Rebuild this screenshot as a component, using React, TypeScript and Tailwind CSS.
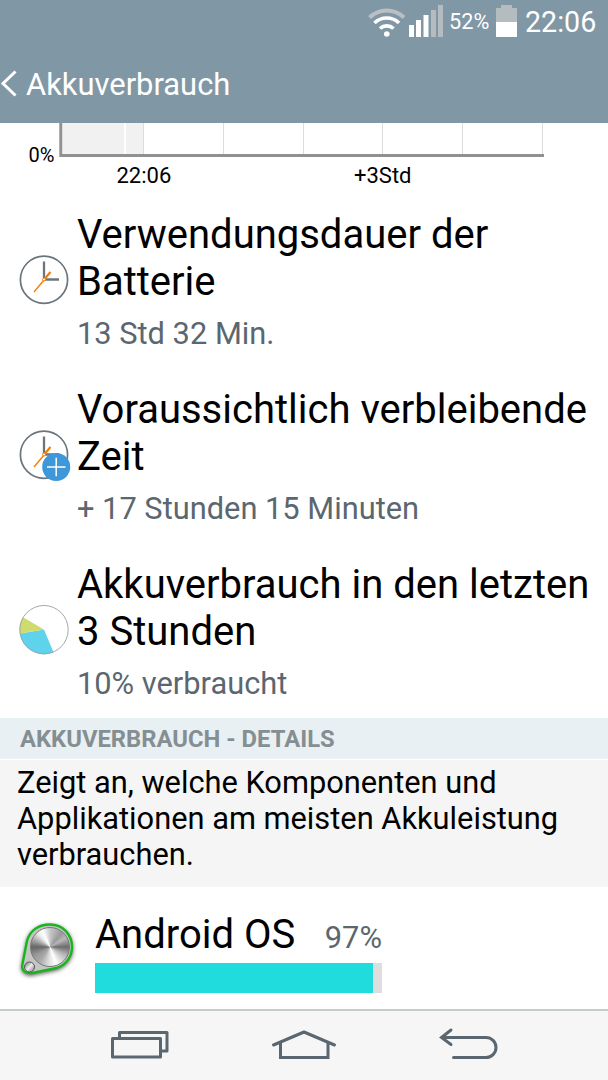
import { ReactNode } from "react";

interface UsageItemProps {
  icon: ReactNode;
  lines: string[];
  value: string;
}

const ClockIcon = ({ plus = false }: { plus?: boolean }) => (
  <svg className="h-[52px] w-[52px]" viewBox="0 0 52 52" fill="none">
    <circle cx="25" cy="25.7" r="23.6" stroke="#6b757c" strokeWidth="1.7" />
    <path d="M25 7.5V24M26 25.5H40" stroke="#6b757c" strokeWidth="2.3" />
    <path d="M15 38L25 26" stroke="#f57c00" strokeWidth="1.3" />
    <path d="M26 24.5L31.5 18" stroke="#f57c00" strokeWidth="2.2" />
    <circle cx="25" cy="25.5" r="1.5" fill="#fff" stroke="#f57c00" />
    {plus && (
      <>
        <circle cx="37.2" cy="38" r="14" fill="#3d97d8" />
        <path d="M28 38H46.5M37.2 28.8V47.3" stroke="#fff" strokeWidth="1.5" />
      </>
    )}
  </svg>
);

const PieIcon = () => (
  <svg className="h-[52px] w-[52px]" viewBox="0 0 52 52">
    <path d="M25 25.5L34.5 48.3A24.5 24.5 0 0 1 .8 29.5Z" fill="#5fd3ec" />
    <path d="M25 25.5L.8 29.5A24.5 24.5 0 0 1 4 13.3Z" fill="#cfdb6e" />
    <circle cx="25" cy="25.7" r="24.2" fill="none" stroke="#9a9fa1" strokeWidth="0.9" />
  </svg>
);

const UsageItem = ({ icon, lines, value }: UsageItemProps) => {
  return (
    <div className="flex h-[175px] pl-[19px]">
      <div className="mt-[61px] w-[58px] shrink-0">{icon}</div>
      <div className="pt-[19px] whitespace-nowrap">
        {lines.map((line) => (
          <div key={line} className="text-[40px] leading-[46.5px] text-black">
            {line}
          </div>
        ))}
        <div className="mt-[10px] text-[30.8px] leading-[37px] text-[#5b6770]">{value}</div>
      </div>
    </div>
  );
};

const StatusBar = () => (
  <div className="flex h-[44px] items-center whitespace-nowrap text-white">
    <svg className="ml-[368px] h-[44px] w-[76px] shrink-0" viewBox="368 0 76 44" fill="none">
      <path d="M369.5 17.5A24.5 24.5 0 0 1 404 17.5" stroke="#b9bfc2" strokeWidth="4" />
      <path d="M374.5 23A17.5 17.5 0 0 1 399 23" stroke="#fff" strokeWidth="3.6" />
      <path d="M380 28.5A10 10 0 0 1 393.5 28.5" stroke="#fff" strokeWidth="3.6" />
      <circle cx="386.8" cy="34" r="2.8" fill="#fff" />
      <path d="M409 25h5v12h-5zM416 20h5v17h-5zM423.5 15h5v22h-5z" fill="#fff" />
      <path d="M431 10h5v27h-5zM438 5h5v32h-5z" fill="#b5bcbf" />
    </svg>
    <span className="ml-[5px] w-[47px] pt-px text-[21.7px]">52%</span>
    <svg className="h-[44px] w-[22px] shrink-0" viewBox="496 0 22 44">
      <path d="M496 8h5V5h11v3h5v14h-21z" fill="#b5bcbf" />
      <path d="M496 22h21v15h-21z" fill="#fff" />
    </svg>
    <span className="ml-[7px] pt-px text-[28.6px]">22:06</span>
  </div>
);

const BatteryChart = () => (
  <svg className="block h-[70px] w-full" viewBox="0 123 608 70" fontFamily="Roboto, sans-serif" fill="#000">
    <path d="M63 123h61v31h-61zM126 123h17v31h-17z" fill="#f1f1f1" />
    <path
      d="M143.5 123v31M223.5 123v31M303.5 123v31M382.5 123v31M462.5 123v31M542.5 123v31"
      stroke="#dcdcdc"
    />
    <path d="M60.8 123V155.5H544" fill="none" stroke="#919191" strokeWidth="3" />
    <text x="28.5" y="162" fontSize="20">0%</text>
    <text x="116.5" y="182.5" fontSize="22">22:06</text>
    <text x="354" y="182.5" fontSize="22">+3Std</text>
  </svg>
);

const outline =
  "M9 24C12 13 21 7.5 32 7.5C45 7.5 54 17.5 54 30C54 42 45 50 36 51.5L14 56C7 57 3 53 4.5 47Z";

const AndroidOsIcon = () => (
  <div className="relative h-[66px] w-[62px]">
    <svg className="h-full w-full overflow-visible" viewBox="0 0 62 66">
      <defs>
        <linearGradient id="knob" x1="0" y1="0" x2="1" y2="1">
          <stop offset="0" stopColor="#666" />
          <stop offset=".5" stopColor="#eee" />
          <stop offset="1" stopColor="#777" />
        </linearGradient>
        <filter id="shadow" x="-20%" y="-20%" width="140%" height="140%">
          <feGaussianBlur stdDeviation="2" />
        </filter>
      </defs>
      <path d={outline} fill="#555" stroke="#555" strokeWidth="2" transform="translate(0 1.5)" filter="url(#shadow)" />
      <path d={outline} fill="#c4c6c4" stroke="#18b51c" strokeWidth="2.4" />
      <circle cx="11.5" cy="50" r="5" fill="url(#knob)" stroke="#555" />
    </svg>
    {/* brushed metal disc */}
    <div className="absolute top-[10px] left-[12px] h-[40px] w-[40px] rounded-full border border-[#777] bg-[conic-gradient(#c8c8c8,#999_40deg,#b8b8b8_60deg,#6c6c6c_90deg,#b0b0b0_115deg,#ddd_140deg,#fff_160deg,#ddd_185deg,#aaa_215deg,#999_240deg,#666_270deg,#aaa_295deg,#eee_320deg,#fff_335deg,#c8c8c8)]" />
  </div>
);

const NavBar = () => (
  <div className="h-[71px] border-t-2 border-[#c6cccb] bg-[#f6f6f6]">
    <svg className="block h-[69px] w-full" viewBox="0 1011 608 69" fill="none" stroke="#5b6770" strokeWidth="3">
      <path d="M112.5 1038.5H160.5V1057H112.5Z" strokeLinejoin="round" />
      <path d="M119.5 1037V1032.5H167V1051H162" strokeLinejoin="round" />
      <path d="M273.5 1045L304 1032L334.5 1045" strokeLinecap="round" strokeLinejoin="round" />
      <path d="M280.5 1043V1057.5H328V1043" />
      <path
        d="M451 1030L441.5 1037.5L451 1044.5M442 1037.5H486A10 10 0 0 1 486 1057.5H453.5"
        strokeLinecap="round"
      />
    </svg>
  </div>
);

const App = () => {
  return (
    <div className="flex h-[1080px] w-[608px] flex-col overflow-hidden bg-white font-[Roboto,sans-serif]">
      <header className="h-[123px] shrink-0 bg-[#8097a5]">
        <StatusBar />
        <div className="flex h-[79px] items-center text-white">
          <svg className="h-[30px] w-[18px]" viewBox="0 0 18 30" fill="none" stroke="#fff" strokeWidth="3">
            <path d="M15.5 2.5L3 14.5L15.5 26.5" />
          </svg>
          <h1 className="ml-[8px] pt-[3px] text-[30.9px]">Akkuverbrauch</h1>
        </div>
      </header>
      <main className="flex-1">
        <BatteryChart />
        <UsageItem icon={<ClockIcon />} lines={["Verwendungsdauer der", "Batterie"]} value="13 Std 32 Min." />
        <UsageItem
          icon={<ClockIcon plus />}
          lines={["Voraussichtlich verbleibende", "Zeit"]}
          value="+ 17 Stunden 15 Minuten"
        />
        <UsageItem
          icon={<PieIcon />}
          lines={["Akkuverbrauch in den letzten", "3 Stunden"]}
          value="10% verbraucht"
        />
        <div className="h-[41px] bg-[#e8f0f4] pl-[20px] text-[23.8px] leading-[43px] font-bold text-[#858e91]">
          AKKUVERBRAUCH - DETAILS
        </div>
        <div className="mt-px h-[127px] bg-[#f5f5f5] pt-[5px] pl-[17px] text-[30.8px] leading-[36px] whitespace-nowrap text-black">
          <div>Zeigt an, welche Komponenten und</div>
          <div>Applikationen am meisten Akkuleistung</div>
          <div>verbrauchen.</div>
        </div>
        <div className="flex h-[122px] pl-[18px]">
          <div className="mt-[30px] w-[77px] shrink-0">
            <AndroidOsIcon />
          </div>
          <div className="w-[287px] pt-[24px]">
            <div className="flex h-[47px] items-baseline justify-between whitespace-nowrap">
              <span className="text-[40px] leading-[47px] text-black">Android OS</span>
              <span className="text-[30.8px] text-[#5b6770]">97%</span>
            </div>
            <div className="mt-[5px] h-[30px] bg-[#dedede]">
              <div className="h-full w-[97%] bg-[#20dcdc]" />
            </div>
          </div>
        </div>
      </main>
      <NavBar />
    </div>
  );
};

export default App;
